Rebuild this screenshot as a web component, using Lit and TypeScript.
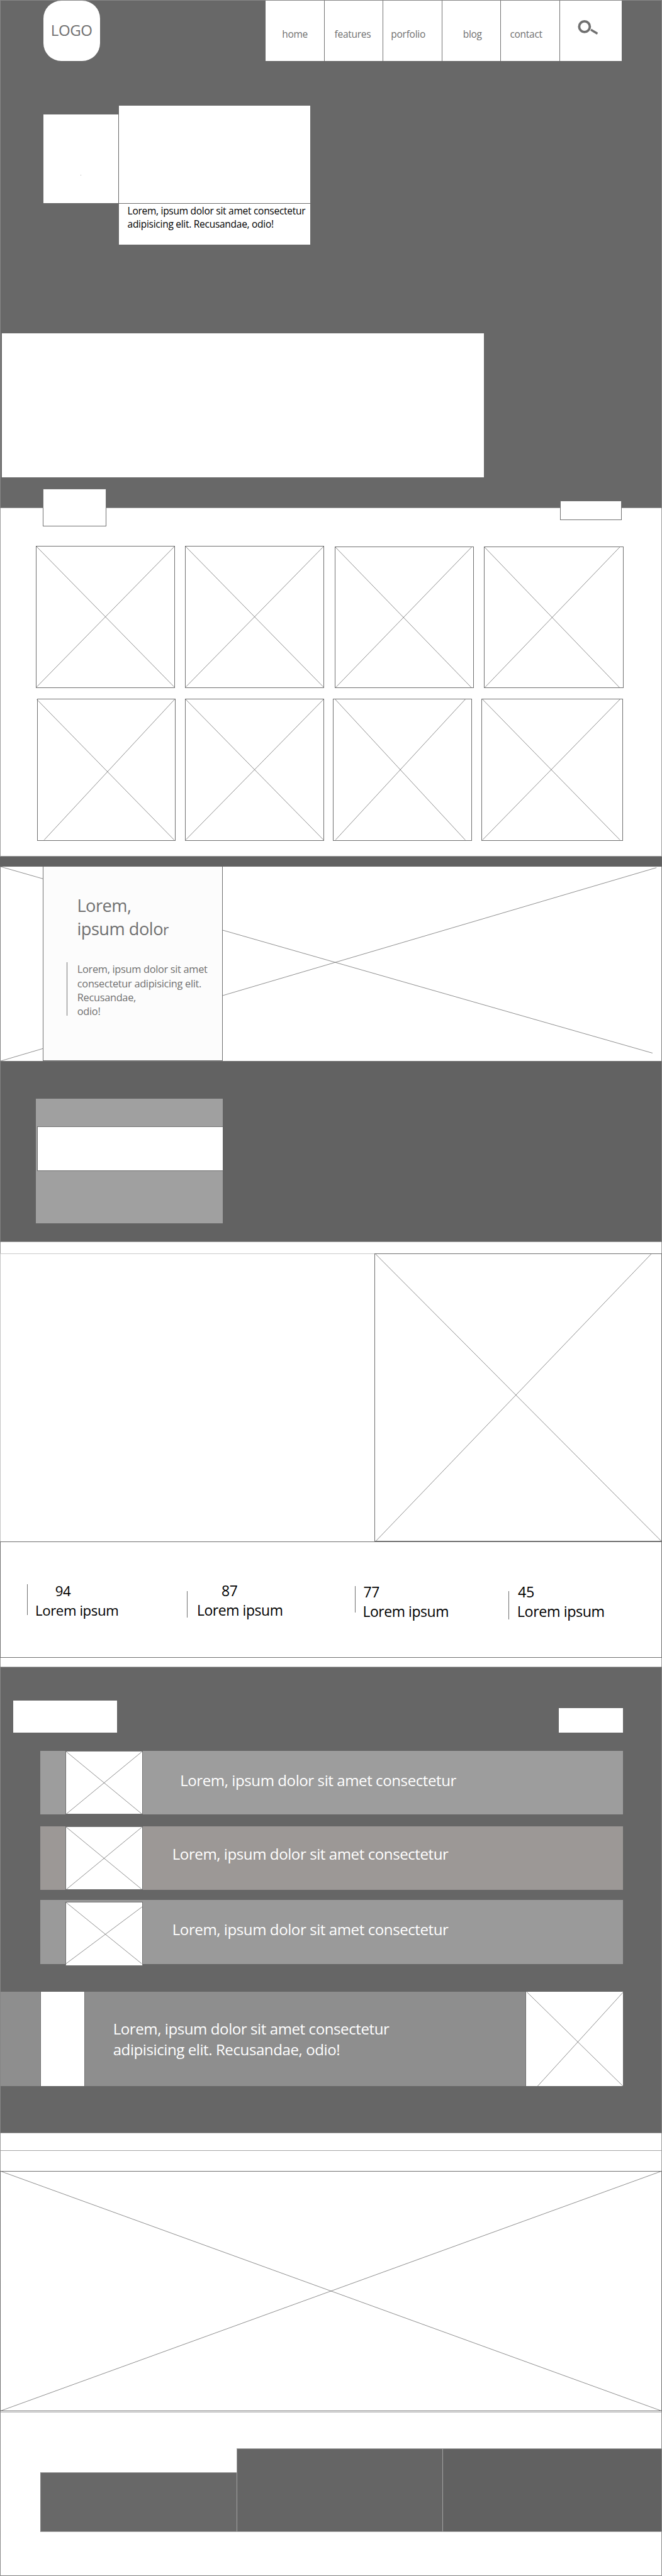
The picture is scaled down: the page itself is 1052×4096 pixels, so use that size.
import { LitElement, html, svg, css, unsafeCSS } from "lit";
import { customElement, property } from "lit/decorators.js";
import { styleMap } from "lit/directives/style-map.js";

// Design units are converted to page pixels by one factor.
const SCALE = 0.7926;
const px = (n: number) => `${(n * SCALE).toFixed(3)}px`;
const u = (n: number) => unsafeCSS(px(n));

type Line = [number, number, number, number];

/** Wireframe image placeholder: two diagonals across a box of w x h units. */
@customElement("cross-box")
export class CrossBox extends LitElement {
  @property({ type: Number }) w = 100;
  @property({ type: Number }) h = 100;
  @property({ attribute: false }) lines?: Line[];

  static styles = css`
    :host { display: block; }
    .canvas { display: block; width: 100%; height: 100%; overflow: visible; }
    .stroke { stroke: #707070; stroke-width: 1; }
  `;

  render() {
    const { w, h } = this;
    const lines: Line[] = this.lines ?? [[0, 0, w, h], [w, 0, 0, h]];
    return html`<svg class="canvas" viewBox="0 0 ${w} ${h}" preserveAspectRatio="none">
      ${lines.map((l) => svg`<line class="stroke" x1=${l[0]} y1=${l[1]} x2=${l[2]} y2=${l[3]}></line>`)}
    </svg>`;
  }
}

interface Tile { gap: number; w: number; drop?: number; lines?: Line[] }
interface Stat { start: number; barTop: number; bar: number; text: number; top: number; indent: number; size: number; value: string }

const NAV = [
  { label: "home", w: 117, pad: 32.8 },
  { label: "features", w: 118, pad: 19.7 },
  { label: "porfolio", w: 118, pad: 15 },
  { label: "blog", w: 118, pad: 41.3 },
  { label: "contact", w: 118.4, pad: 17.6 },
];

const GALLERY: Tile[][] = [
  [
    { gap: 71.3, w: 279 },
    { gap: 20.7, w: 279 },
    { gap: 21.2, w: 278.6, drop: 0.8, lines: [[0, 0, 275.5, 284], [275.5, 0, 0, 284]] },
    { gap: 21, w: 279, drop: 0.8, lines: [[0, 0, 273.5, 284], [273.5, 0, 0, 284]] },
  ],
  [
    { gap: 74, w: 278.5, lines: [[-2, 0, 276, 284], [277, 0, 13, 284]] },
    { gap: 18.5, w: 279 },
    { gap: 18, w: 278.5, lines: [[3.5, 0, 266.5, 284], [266.5, 0, 4, 284]] },
    { gap: 18.5, w: 284.6, lines: [[1, 0, 279, 284], [279, 0, 1, 284]] },
  ],
];

const STATS: Stat[] = [
  { start: 54.2, barTop: 86, bar: 62, text: 16.2, top: 80, indent: 40, size: 28.6, value: "94" },
  { start: 375, barTop: 100, bar: 53, text: 19.5, top: 80, indent: 49.5, size: 29.5, value: "87" },
  { start: 711, barTop: 90, bar: 53, text: 16, top: 82, indent: 1.5, size: 29.5, value: "77" },
  { start: 1019, barTop: 100, bar: 57, text: 17.6, top: 82, indent: 1.5, size: 30, value: "45" },
];

const ROWS = [
  { tone: "a", text: 74.7, top: 39.6, drop: 0, lines: undefined as Line[] | undefined },
  { tone: "b", text: 59, top: 35.4, drop: 0, lines: undefined },
  { tone: "c", text: 59, top: 39.2, drop: 3.4, lines: [[0, 0, 153, 125], [154, 9, 0, 125]] as Line[] },
];

@customElement("app-root")
export class AppRoot extends LitElement {
  static styles = css`
    :host {
      display: block;
      width: 100%;
      height: 4096px;
      overflow: hidden;
      background: #fff;
      color: #707070;
      font-family: "Open Sans", "Noto Sans", sans-serif;
    }
    * { box-sizing: border-box; letter-spacing: -0.018em; }
    p, h2 { margin: 0; font-weight: 400; white-space: nowrap; }
    section, footer { box-shadow: inset 1px 0 #9c9c9c, inset -1px 0 #9c9c9c; }

    .t20 { font-size: ${u(19.6)}; line-height: ${u(27)}; }
    .t21 { font-size: ${u(20.6)}; line-height: ${u(28.1)}; }
    .t31 { font-size: ${u(30.4)}; line-height: ${u(41)}; }
    .t35 { font-size: ${u(34.3)}; line-height: ${u(47)}; }

    /* hero */
    .hero {
      height: ${u(1019.5)};
      background: #686868;
      box-shadow: inset 1px 0 #868686, inset -1px 0 #868686, inset 0 1px #868686, inset 0 -1px #9a9a9a;
    }
    .header { display: flex; padding-top: ${u(1)}; }
    .logo {
      margin-left: ${u(87)};
      width: ${u(113)};
      height: ${u(121)};
      padding: ${u(39.9)} 0 0 ${u(15)};
      border-radius: ${u(36)};
      background: #fff;
    }
    .nav { display: flex; margin-left: ${u(332.7)}; height: ${u(121)}; background: #fff; }
    .item { padding-top: ${u(54.5)}; }
    .item + .item, .search { border-left: 1px solid #737373; }
    .search { width: ${u(124)}; }
    .glass { display: block; width: ${u(124)}; height: ${u(121)}; }
    .cards { display: flex; align-items: flex-start; gap: ${u(2)}; margin: ${u(90)} 0 0 ${u(87)}; height: ${u(279)}; }
    .card { width: ${u(150)}; height: ${u(177)}; margin-top: ${u(18)}; padding: ${u(121)} 0 0 ${u(75)}; background: #fff; }
    .dot { width: 1px; height: 1px; background: #a8a8a8; }
    .bigcard { width: ${u(383.3)}; background: #fff; }
    .picture { height: ${u(196)}; }
    .caption { height: ${u(83)}; padding: ${u(0.4)} 0 0 ${u(16.6)}; border-top: 1px solid #707070; color: #000; }
    .wide { margin: ${u(178)} 0 0 ${u(4.2)}; width: ${u(966)}; height: ${u(289)}; background: #fff; }

    /* gallery */
    .gallery { height: ${u(697.8)}; }
    .shift { height: ${u(75.8)}; }
    .tabs { display: flex; justify-content: space-between; align-items: flex-start; padding: 0 ${u(80.3)} 0 ${u(86.3)}; }
    .tab { border: 1px solid #707070; background: #fff; position: relative; }
    .tab.left { width: ${u(127)}; height: ${u(75)}; margin-top: ${u(-38.8)}; }
    .tab.right { width: ${u(124.6)}; height: ${u(39)}; margin-top: ${u(-14.8)}; }
    .line { display: flex; height: ${u(306.9)}; }
    .tile { height: ${u(284.6)}; border: 1px solid #707070; }

    /* feature */
    .band { height: ${u(21.9)}; background: #626262; box-shadow: inset 0 1px #9a9a9a; }
    .feature { display: grid; height: ${u(389.8)}; box-shadow: inset 1px 0 #808080, inset -1px 0 #808080; }
    .feature > * { grid-area: 1 / 1; }
    .panel {
      z-index: 1;
      width: ${u(360.6)};
      height: ${u(389.5)};
      margin-left: ${u(86.2)};
      padding: ${u(53.7)} 0 0 ${u(46)};
      border: 1px solid #707070;
      border-top: 0;
      background: #fcfcfc;
    }
    .panel h2 { padding-left: ${u(21)}; }
    .last { font-size: ${u(29)}; }
    .quote { height: ${u(107)}; margin-top: ${u(47)}; padding-left: ${u(20.3)}; border-left: 1px solid #707070; }
    .quote p { margin-top: ${u(-5.5)}; }

    .block { height: ${u(362.4)}; padding: ${u(75.6)} 0 0 ${u(71.7)}; background: #626262; box-shadow: inset 1px 0 #808080, inset -1px 0 #808080, inset 0 1px #707070, inset 0 -1px #9a9a9a; }
    .stack { width: ${u(375)}; height: ${u(250.5)}; padding: ${u(54.5)} 0 0 ${u(2.3)}; background: #a0a0a0; border-bottom: 1px solid #6c6c6c; }
    .slot { height: ${u(90.6)}; border: 1px solid #707070; border-right: 0; background: #fff; }

    /* split */
    .spacer { height: ${u(22.6)}; box-shadow: inset 1px 0 #9c9c9c, inset -1px 0 #9c9c9c; }
    .split { display: flex; height: ${u(578)}; justify-content: flex-end; box-shadow: inset 1px 0 #c4c4c4, inset 0 1px #cacaca; }
    .split cross-box { width: ${u(577)}; height: ${u(578)}; border: 1px solid #707070; }

    /* stats */
    .stats { display: grid; height: ${u(234)}; box-shadow: inset 0 0 0 1px #707070; }
    .stat { grid-area: 1 / 1; display: flex; align-items: flex-start; color: #000; }
    .bar { width: 1px; background: #707070; }
    .stat p { line-height: ${u(39.6)}; }
    .under { height: ${u(17.5)}; }

    /* list */
    .list { height: ${u(936.2)}; background: #666; box-shadow: inset 1px 0 #868686, inset -1px 0 #868686, inset 0 1px #acacac, inset 0 -1px #9a9a9a; }
    .bars { display: flex; justify-content: space-between; align-items: flex-end; height: ${u(132.8)}; padding: 0 ${u(77.7)} 0 ${u(27)}; }
    .bars div { background: #fff; }
    .b1 { width: ${u(207.2)}; height: ${u(64.3)}; }
    .b2 { width: ${u(129.6)}; height: ${u(49.2)}; }
    .row { display: flex; align-items: flex-start; height: ${u(127.9)}; margin: 0 ${u(77.7)} 0 ${u(80.9)}; color: #fff; }
    .row.a { background: #9d9d9d; margin-top: ${u(35.7)}; }
    .row.b { background: #9c9896; margin-top: ${u(24)}; }
    .row.c { background: #9a9a9a; margin-top: ${u(20.3)}; }
    .thumb { width: ${u(155)}; height: ${u(128.2)}; margin-left: ${u(50.5)}; border: 1px solid #707070; background: #fff; }
    .banner { display: flex; height: ${u(189.6)}; margin: ${u(55.8)} ${u(77.7)} 0 ${u(1.2)}; background: #8e8e8e; color: #fff; }
    .strip { width: ${u(90)}; margin-left: ${u(79.5)}; border: 1px solid #707070; border-width: 0 1px; background: #fff; }
    .banner p { flex: 1; padding: ${u(55)} 0 0 ${u(56)}; }
    .banner cross-box { width: ${u(195.8)}; border-left: 1px solid #707070; background: #fff; }

    /* closing */
    .gap1 { height: ${u(34.3)}; }
    .gap2 { height: ${u(42)}; box-shadow: inset 1px 0 #9c9c9c, inset -1px 0 #9c9c9c, inset 0 1px #a6a6a6; }
    .photo { height: ${u(481.7)}; box-shadow: inset 0 0 0 1px #707070; }
    .photo cross-box { height: 100%; }
    .footer { display: flex; align-items: flex-end; height: ${u(330.3)}; padding: 0 0 ${u(88.2)} ${u(80.6)}; box-shadow: inset 1px 0 #8a8a8a, inset -1px 0 #8a8a8a, inset 0 -1px #808080, inset 0 1px #fff, inset 0 2px #b4b4b4; }
    .col { border: 1px solid #a2a2a2; border-right: 0; }
    .c1 { width: ${u(394)}; height: ${u(120)}; background: #686868; border-left-color: #868686; }
    .c2 { width: ${u(412.3)}; height: ${u(168)}; background: #656565; }
    .c3 { flex: 1; height: ${u(168)}; background: #616161; border-right: 1px solid #868686; }
  `;

  private tile(t: Tile) {
    return html`<cross-box class="tile" .w=${t.w} .h=${284} .lines=${t.lines}
      style=${styleMap({ width: px(t.w), marginLeft: px(t.gap), marginTop: px(t.drop ?? 0) })}></cross-box>`;
  }

  private stat(s: Stat) {
    return html`<div class="stat" style=${styleMap({ marginLeft: px(s.start) })}>
      <div class="bar" style=${styleMap({ height: px(s.bar), marginTop: px(s.barTop) })}></div>
      <div style=${styleMap({ paddingLeft: px(s.text - 1), paddingTop: px(s.top), fontSize: px(s.size * 0.98) })}>
        <p style=${styleMap({ paddingLeft: px(s.indent) })}>${s.value}</p>
        <p>Lorem ipsum</p>
      </div>
    </div>`;
  }

  render() {
    return html`
      <section class="hero">
        <div class="header">
          <div class="logo t31">LOGO</div>
          <nav class="nav">
            ${NAV.map((n) => html`<div class="item t20" style=${styleMap({ width: px(n.w), paddingLeft: px(n.pad) })}>${n.label}</div>`)}
            <div class="search">
              <svg class="glass" viewBox="0 0 124 121" fill="none" stroke="#707070">
                <circle cx="49" cy="52.3" r="10.7" stroke-width="4.8"></circle>
                <path d="M61.8 58.4L75 66.2" stroke-width="4.4"></path>
              </svg>
            </div>
          </nav>
        </div>
        <div class="cards">
          <div class="card"><div class="dot"></div></div>
          <div class="bigcard">
            <div class="picture"></div>
            <p class="caption t20">Lorem, ipsum dolor sit amet consectetur<br />adipisicing elit. Recusandae, odio!</p>
          </div>
        </div>
        <div class="wide"></div>
      </section>

      <section class="gallery">
        <div class="shift"><div class="tabs"><div class="tab left"></div><div class="tab right"></div></div></div>
        ${GALLERY.map((r) => html`<div class="line">${r.map((t) => this.tile(t))}</div>`)}
      </section>

      <div class="band"></div>
      <section class="feature">
        <cross-box .w=${1327} .h=${390} .lines=${[[1, 0, 1308, 374], [1, 390, 1316, 2]] as Line[]}></cross-box>
        <div class="panel">
          <h2 class="t35">Lorem,<br />ipsum dolo<span class="last">r</span></h2>
          <div class="quote">
            <p class="t21">Lorem, ipsum dolor sit amet<br />consectetur adipisicing elit.<br />Recusandae,<br />odio!</p>
          </div>
        </div>
      </section>
      <section class="block"><div class="stack"><div class="slot"></div></div></section>

      <div class="spacer"></div>
      <section class="split">
        <cross-box .w=${577} .h=${577} .lines=${[[1, 0, 576, 577], [556, 0, 2, 577]] as Line[]}></cross-box>
      </section>
      <section class="stats">${STATS.map((s) => this.stat(s))}</section>
      <section class="under"></section>

      <section class="list">
        <div class="bars"><div class="b1"></div><div class="b2"></div></div>
        ${ROWS.map((r) => html`<div class="row ${r.tone}">
          <cross-box class="thumb" .w=${154} .h=${128} .lines=${r.lines} style=${styleMap({ marginTop: px(r.drop) })}></cross-box>
          <p class="t31" style=${styleMap({ paddingLeft: px(r.text), paddingTop: px(r.top) })}>Lorem, ipsum dolor sit amet consectetur</p>
        </div>`)}
        <div class="banner">
          <div class="strip"></div>
          <p class="t31">Lorem, ipsum dolor sit amet consectetur<br />adipisicing elit. Recusandae, odio!</p>
          <cross-box .w=${195} .h=${189} .lines=${[[1, 0, 195, 189], [195, 1, 23, 189]] as Line[]}></cross-box>
        </div>
      </section>

      <section class="gap1"></section>
      <section class="gap2"></section>
      <section class="photo"><cross-box .w=${1327} .h=${481}></cross-box></section>
      <footer class="footer"><div class="col c1"></div><div class="col c2"></div><div class="col c3"></div></footer>
    `;
  }
}
